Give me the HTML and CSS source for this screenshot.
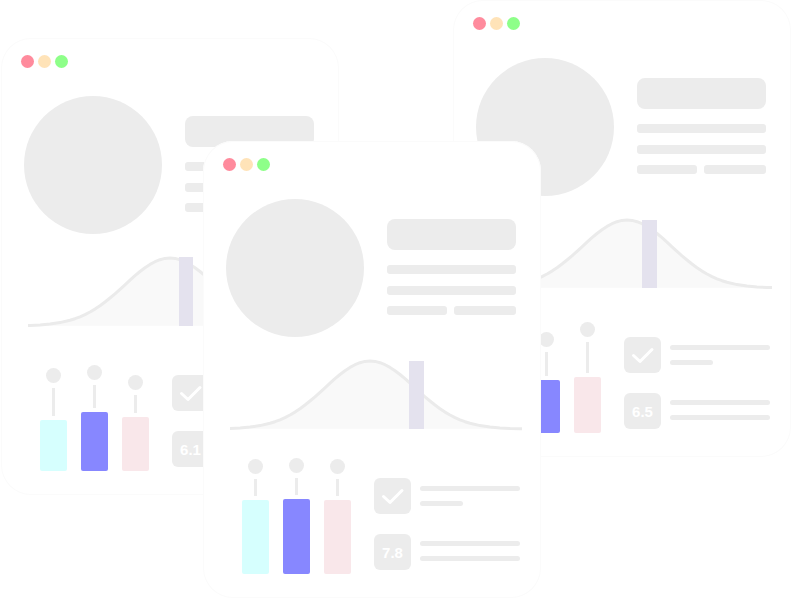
FILE: index.html
```html
<!DOCTYPE html>
<html lang="en">
<head>
<meta charset="utf-8">
<title>Windows</title>
<link rel="stylesheet" href="styles.css">
</head>
<body>
<div class="desk">
  <svg class="defs" width="0" height="0" aria-hidden="true">
    <defs>
      <path id="gauss-line" d="M-160,79.8 L-150,79.7 L-140,79.5 L-130,78.95 L-120,78.1 L-110,76.6 L-100,74.25 L-95,72.7 L-90,70.8 L-85,68.6 L-80,66 L-75,63.1 L-70,59.7 L-65,56 L-60,52 L-55,47.8 L-50,43.3 L-45,38.8 L-40,34.2 L-35,29.7 L-30,25.5 L-25,21.7 L-20,18.4 L-15,15.7 L-10,13.7 L-5,12.4 L0,12 L5,12.4 L10,13.7 L15,15.7 L20,18.4 L25,21.7 L30,25.5 L35,29.7 L40,34.2 L45,38.8 L50,43.3 L55,47.8 L60,52 L65,56 L70,59.7 L75,63.1 L80,66 L85,68.6 L90,70.8 L95,72.7 L100,74.25 L110,76.6 L120,78.1 L130,78.95 L140,79.5 L150,79.7 L160,79.8"/>
    </defs>
  </svg>

  <!-- left window -->
  <div class="win win-left">
    <div class="dots"><span class="dot red"></span><span class="dot yellow"></span><span class="dot green"></span></div>
    <div class="hero">
      <div class="avatar"></div>
      <div class="info">
        <div class="title"></div>
        <div class="line l1"></div>
        <div class="line l2"></div>
        <div class="split"><div class="line a"></div><div class="line b"></div></div>
      </div>
    </div>
    <svg class="curve" viewBox="0 0 292 82" width="292" height="82">
      <g transform="translate(142,0)">
        <use href="#gauss-line" class="g-fill"/>
        <use href="#gauss-line" class="g-stroke"/>
      </g>
      <rect class="marker" x="151" y="11" width="14" height="69"/>
    </svg>
    <div class="bottom">
      <div class="bars">
        <div class="col"><div class="knob"></div><div class="stem" style="height:28px"></div><div class="bar cyan" style="height:51px"></div></div>
        <div class="col"><div class="knob"></div><div class="stem" style="height:23px"></div><div class="bar blue" style="height:59px"></div></div>
        <div class="col"><div class="knob"></div><div class="stem" style="height:18px"></div><div class="bar pink" style="height:54px"></div></div>
      </div>
      <div class="stats">
        <div class="stat">
          <div class="badge"><svg width="37" height="36" viewBox="0 0 37 36"><path class="tick" d="M9.5 18.5 L16 24.5 L28 12.5"/></svg></div>
          <div class="lines first"><div class="sl"></div><div class="sl short"></div></div>
        </div>
        <div class="stat">
          <div class="badge">6.1</div>
          <div class="lines"><div class="sl"></div><div class="sl"></div></div>
        </div>
      </div>
    </div>
  </div>

  <!-- right window -->
  <div class="win win-right">
    <div class="dots"><span class="dot red"></span><span class="dot yellow"></span><span class="dot green"></span></div>
    <div class="hero">
      <div class="avatar"></div>
      <div class="info">
        <div class="title"></div>
        <div class="line l1"></div>
        <div class="line l2"></div>
        <div class="split"><div class="line a"></div><div class="line b"></div></div>
      </div>
    </div>
    <svg class="curve" viewBox="0 0 292 82" width="292" height="82">
      <g transform="translate(147,0)">
        <use href="#gauss-line" class="g-fill"/>
        <use href="#gauss-line" class="g-stroke"/>
      </g>
      <rect class="marker" x="162" y="12" width="15" height="68"/>
    </svg>
    <div class="bottom">
      <div class="bars">
        <div class="col"><div class="knob"></div><div class="stem" style="height:20px"></div><div class="bar cyan" style="height:55px"></div></div>
        <div class="col"><div class="knob"></div><div class="stem" style="height:24px"></div><div class="bar blue" style="height:53px"></div></div>
        <div class="col"><div class="knob"></div><div class="stem" style="height:31px"></div><div class="bar pink" style="height:56px"></div></div>
      </div>
      <div class="stats">
        <div class="stat">
          <div class="badge"><svg width="37" height="36" viewBox="0 0 37 36"><path class="tick" d="M9.5 18.5 L16 24.5 L28 12.5"/></svg></div>
          <div class="lines first"><div class="sl"></div><div class="sl short"></div></div>
        </div>
        <div class="stat">
          <div class="badge">6.5</div>
          <div class="lines"><div class="sl"></div><div class="sl"></div></div>
        </div>
      </div>
    </div>
  </div>

  <!-- front window -->
  <div class="win win-front">
    <div class="dots"><span class="dot red"></span><span class="dot yellow"></span><span class="dot green"></span></div>
    <div class="hero">
      <div class="avatar"></div>
      <div class="info">
        <div class="title"></div>
        <div class="line l1"></div>
        <div class="line l2"></div>
        <div class="split"><div class="line a"></div><div class="line b"></div></div>
      </div>
    </div>
    <svg class="curve" viewBox="0 0 292 82" width="292" height="82">
      <g transform="translate(140,0)">
        <use href="#gauss-line" class="g-fill"/>
        <use href="#gauss-line" class="g-stroke"/>
      </g>
      <rect class="marker" x="179" y="12" width="15" height="68"/>
    </svg>
    <div class="bottom">
      <div class="bars">
        <div class="col"><div class="knob"></div><div class="stem" style="height:17px"></div><div class="bar cyan" style="height:74px"></div></div>
        <div class="col"><div class="knob"></div><div class="stem" style="height:17px"></div><div class="bar blue" style="height:75px"></div></div>
        <div class="col"><div class="knob"></div><div class="stem" style="height:17px"></div><div class="bar pink" style="height:74px"></div></div>
      </div>
      <div class="stats">
        <div class="stat">
          <div class="badge"><svg width="37" height="36" viewBox="0 0 37 36"><path class="tick" d="M9.5 18.5 L16 24.5 L28 12.5"/></svg></div>
          <div class="lines first"><div class="sl"></div><div class="sl short"></div></div>
        </div>
        <div class="stat">
          <div class="badge">7.8</div>
          <div class="lines"><div class="sl"></div><div class="sl"></div></div>
        </div>
      </div>
    </div>
  </div>
</div>
</body>
</html>
```

FILE: styles.css
```css
* { box-sizing: border-box; }

html, body {
  margin: 0;
  padding: 0;
  background: #ffffff;
  font-family: "Liberation Sans", Arial, sans-serif;
}

.desk {
  position: relative;
  width: 791px;
  height: 600px;
  overflow: hidden;
  background: #ffffff;
}

.defs { position: absolute; width: 0; height: 0; }

.win {
  position: absolute;
  width: 338px;
  height: 457px;
  background: #ffffff;
  border-radius: 30px;
  box-shadow: inset 0 0 0 1px #fbfbfb;
  display: flex;
  flex-direction: column;
  overflow: hidden;
}

.win-left { left: 1px; top: 38px; z-index: 1; }
.win-right { left: 453px; top: 0; z-index: 1; }
.win-front { left: 203px; top: 141px; z-index: 2; }

.dots {
  display: flex;
  gap: 4px;
  margin: 17px 0 0 20px;
}

.dot {
  width: 13px;
  height: 13px;
  border-radius: 50%;
  display: block;
}

.red { background: #ff8b9d; }
.yellow { background: #ffe3b8; }
.green { background: #8eff89; }

.hero {
  display: flex;
  margin-top: 28px;
  padding-left: 23px;
}

.avatar {
  flex: none;
  width: 138px;
  height: 138px;
  border-radius: 50%;
  background: #ececec;
}

.info {
  width: 129px;
  margin-left: 23px;
  margin-top: 20px;
  display: flex;
  flex-direction: column;
}

.title {
  height: 31px;
  border-radius: 8px;
  background: #ececec;
}

.line {
  height: 9px;
  border-radius: 3px;
  background: #ececec;
}

.l1 { margin-top: 15px; }
.l2 { margin-top: 12px; }

.split {
  display: flex;
  gap: 7px;
  margin-top: 11px;
}

.split .a { width: 60px; }
.split .b { width: 62px; }

.curve {
  display: block;
  margin: 12px 0 0 27px;
  overflow: hidden;
}

.g-fill { fill: #f9f9f9; stroke: none; }
.g-stroke { fill: none; stroke: #ebebeb; stroke-width: 3; stroke-linejoin: round; }
.marker { fill: #e4e2ee; }

.bottom {
  display: flex;
  margin-top: 30px;
  height: 113px;
}

.bars {
  display: flex;
  gap: 14px;
  margin-left: 39px;
  align-items: flex-end;
  height: 100%;
}

.col {
  width: 27px;
  display: flex;
  flex-direction: column;
  align-items: center;
}

.knob {
  width: 15px;
  height: 15px;
  border-radius: 50%;
  background: #ececec;
}

.stem {
  width: 3px;
  background: #ececec;
  margin-top: 5px;
  margin-bottom: 4px;
}

.bar {
  width: 27px;
  border-radius: 2px;
}

.cyan { background: #d6fffe; }
.blue { background: #8787ff; }
.pink { background: #f9e7ea; }

.stats {
  margin-left: 23px;
  padding-top: 17px;
  display: flex;
  flex-direction: column;
  gap: 20px;
}

.stat {
  display: flex;
  gap: 9px;
}

.badge {
  flex: none;
  width: 37px;
  height: 36px;
  border-radius: 6px;
  background: #ececec;
  color: #ffffff;
  font-weight: 700;
  font-size: 15px;
  display: flex;
  align-items: center;
  justify-content: center;
}

.badge svg { display: block; }

.tick {
  fill: none;
  stroke: #ffffff;
  stroke-width: 3;
  stroke-linecap: round;
  stroke-linejoin: round;
}

.lines {
  width: 100px;
  padding-top: 7px;
  display: flex;
  flex-direction: column;
  gap: 10px;
}

.lines.first { padding-top: 8px; }

.sl {
  height: 5px;
  border-radius: 3px;
  background: #ececec;
}

.sl.short { width: 43px; }
```
